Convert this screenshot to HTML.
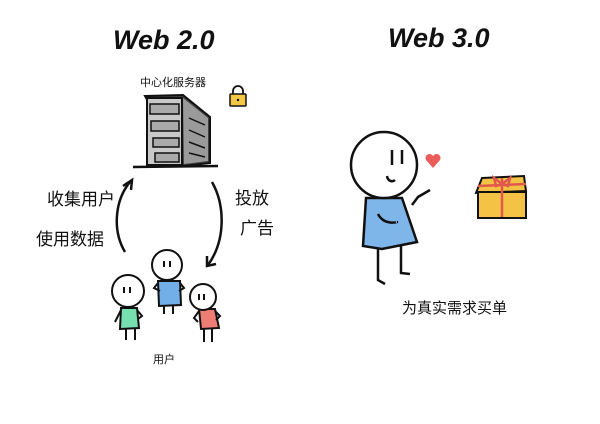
<!DOCTYPE html>
<html><head><meta charset="utf-8"><style>
html,body{margin:0;padding:0;background:#fff;}
svg{display:block}
text{font-family:"Liberation Sans","Noto Sans CJK SC",sans-serif;fill:#111}
</style></head><body>
<svg width="600" height="424" viewBox="0 0 600 424" xmlns="http://www.w3.org/2000/svg">
<rect width="600" height="424" fill="#fff"/>
<text x="113" y="49" font-size="27" font-weight="bold" font-style="italic">Web 2.0</text>
<text x="388" y="47" font-size="27" font-weight="bold" font-style="italic">Web 3.0</text>
<text x="140" y="86" font-size="11">中心化服务器</text>
<path d="M233 94 v-3 a5 5 0 0 1 10 0 v3" fill="none" stroke="#111" stroke-width="1.8"/>
<rect x="230" y="94" width="16" height="12" rx="1" fill="#f2c744" stroke="#111" stroke-width="1.5"/>
<circle cx="238" cy="100" r="1.2" fill="#111"/>
<path d="M145 96 L183 95 L210 117 L210 163 L183 166 Z" fill="#444" stroke="#111" stroke-width="2"/>
<path d="M183 98 L208 118 L208 161 L184 164 Z" fill="#9a9a9a"/>
<rect x="147" y="98" width="35" height="67" fill="#c9c9c9" stroke="#111" stroke-width="2"/>
<g fill="#aaa" stroke="#111" stroke-width="1.5">
<rect x="150" y="104" width="29" height="10"/><rect x="151" y="121" width="28" height="10"/>
<rect x="153" y="138" width="26" height="9"/><rect x="155" y="153" width="24" height="9"/></g>
<g stroke="#111" stroke-width="1.5"><line x1="189" y1="118" x2="205" y2="125"/><line x1="189" y1="130" x2="205" y2="137"/><line x1="189" y1="142" x2="205" y2="148"/><line x1="189" y1="153" x2="205" y2="157"/></g>
<line x1="133" y1="167" x2="218" y2="166" stroke="#111" stroke-width="2.5"/>
<path d="M125 252 C112 230 115 200 130 182" fill="none" stroke="#111" stroke-width="2.5"/>
<path d="M123 186 L132 180 L131 190" fill="none" stroke="#111" stroke-width="2.5"/>
<path d="M212 182 C225 205 226 240 208 265" fill="none" stroke="#111" stroke-width="2.5"/>
<path d="M207 256 L207 266 L216 264" fill="none" stroke="#111" stroke-width="2.5"/>
<text x="47" y="205" font-size="17">收集用户</text>
<text x="36" y="245" font-size="17">使用数据</text>
<text x="235" y="204" font-size="17">投放</text>
<text x="240" y="234" font-size="17">广告</text>
<g stroke="#111" stroke-width="2">
<path d="M158 281 L180 281 L181 305 L159 306 Z" fill="#72aee8"/>
<path d="M158 283 L154 288 L160 291 M180 283 L184 288 L179 291" fill="none"/>
<path d="M164 306 V314 M173 306 V314" />
<circle cx="167" cy="265" r="15" fill="#fff"/>
<path d="M121 308 L137 308 L139 328 L120 329 Z" fill="#77e0b0"/>
<path d="M121 310 L115 322 M137 310 L142 316 L138 319" fill="none"/>
<path d="M126 329 V340 M135 329 V340"/>
<circle cx="128" cy="291" r="16" fill="#fff"/>
<path d="M199 309 L215 309 L219 328 L201 329 Z" fill="#ee7d76"/>
<path d="M199 311 L194 318 L198 322 M215 311 L220 316 L216 320" fill="none"/>
<path d="M204 329 V342 M212 329 V342"/>
<circle cx="203" cy="297" r="13" fill="#fff"/>
</g>
<g stroke="#111" stroke-width="2"><path d="M164 261v6M170 261v6M124 287v6M130 287v6M199 294v6M204 294v6"/></g>
<text x="153" y="363" font-size="11">用户</text>
<g stroke="#111" stroke-width="2.5">
<path d="M366 198 L402 198 L417 242 L382 249 L363 246 Z" fill="#7fb6ea"/>
<path d="M378 214 C384 226 398 222 397 222" fill="none"/>
<path d="M412 205 L418 197 L430 190" fill="none"/>
<path d="M378 249 V280 L385 284 M401 246 V273 L410 274" fill="none"/>
<circle cx="384" cy="165" r="33" fill="#fff"/>
<path d="M392 150 V165 M402 150 V164 M387 176 C388 182 393 182 395 180" fill="none"/>
</g>
<path d="M433 168 L426 160 A3.5 3.5 0 0 1 433 156 A3.5 3.5 0 0 1 440 160 Z" fill="#ea5d5a"/>
<g stroke="#111" stroke-width="2">
<path d="M482 178 L524 176 L526 191 L476 193 Z" fill="#f4c244"/>
<rect x="478" y="192" width="48" height="26" fill="#f4c244"/>
</g>
<g stroke="#e2574e" stroke-width="2.5" fill="none">
<path d="M502 178 V217 M478 186 L526 184"/>
<path d="M502 184 L494 178 L496 186 Z M502 184 L510 178 L508 186 Z"/>
</g>
<text x="402" y="313" font-size="15">为真实需求买单</text>
</svg>
</body></html>
